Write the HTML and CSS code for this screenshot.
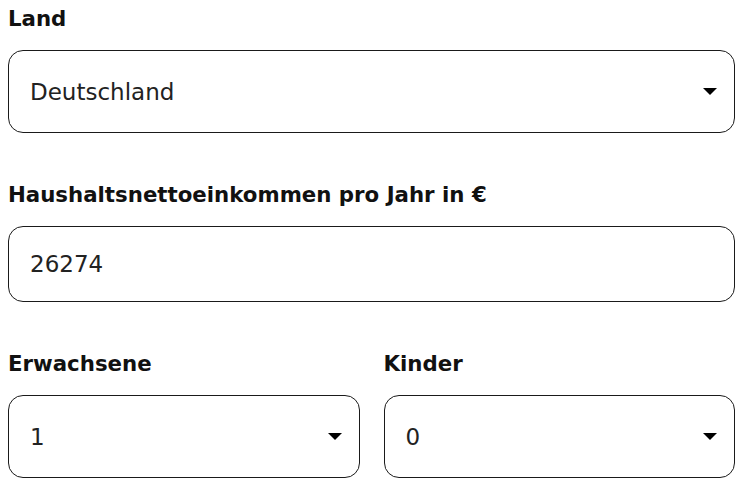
FILE: index.html
```html
<!DOCTYPE html>
<html lang="de">
<head>
  <meta charset="UTF-8">
  <title>Haushalt</title>
  <link rel="stylesheet" href="styles.css">
</head>
<body>
  <form class="calc-form">

    <div class="field">
      <label class="field-label" for="land">Land</label>
      <div class="select-wrap">
        <select id="land" class="control control-select">
          <option>Deutschland</option>
          <option>Österreich</option>
          <option>Schweiz</option>
        </select>
        <svg class="caret" width="14" height="7" viewBox="0 0 14 7"><path d="M0 0h14L7 7z"/></svg>
      </div>
    </div>

    <div class="field">
      <label class="field-label" for="einkommen">Haushaltsnettoeinkommen pro Jahr in €</label>
      <input id="einkommen" class="control control-input" type="text" value="26274">
    </div>

    <div class="field-row">
      <div class="field">
        <label class="field-label" for="erwachsene">Erwachsene</label>
        <div class="select-wrap">
          <select id="erwachsene" class="control control-select">
            <option>1</option>
            <option>2</option>
            <option>3</option>
          </select>
          <svg class="caret" width="14" height="7" viewBox="0 0 14 7"><path d="M0 0h14L7 7z"/></svg>
        </div>
      </div>
      <div class="field">
        <label class="field-label" for="kinder">Kinder</label>
        <div class="select-wrap">
          <select id="kinder" class="control control-select">
            <option>0</option>
            <option>1</option>
            <option>2</option>
          </select>
          <svg class="caret" width="14" height="7" viewBox="0 0 14 7"><path d="M0 0h14L7 7z"/></svg>
        </div>
      </div>
    </div>

  </form>
</body>
</html>
```

FILE: styles.css
```css
body {
  margin: 0;
  padding: 5px 8px 0;
  background: #fff;
  font-family: "DejaVu Sans", Verdana, sans-serif;
  color: #1b1b1b;
}

.field {
  margin-bottom: 48px;
}

.field-row .field {
  margin-bottom: 0;
}

.field-label {
  display: block;
  font-size: 21.3px;
  line-height: 28px;
  font-weight: 700;
  color: #111;
  margin-bottom: 17px;
}

.field-row {
  display: grid;
  grid-template-columns: 1fr 1fr;
  gap: 24px;
}

.select-wrap {
  position: relative;
}

.control {
  display: block;
  width: 100%;
  box-sizing: border-box;
  border: 1.5px solid #1a1a1a;
  border-radius: 15px;
  background: #fff;
  padding: 0 21px;
  font-family: inherit;
  font-size: 23px;
  color: #222;
  margin: 0;
}

.control-select {
  height: 83px;
  appearance: none;
  -webkit-appearance: none;
}

.control-input {
  height: 76px;
}

.caret {
  position: absolute;
  right: 18px;
  top: 38px;
  fill: #000;
  pointer-events: none;
}
```
